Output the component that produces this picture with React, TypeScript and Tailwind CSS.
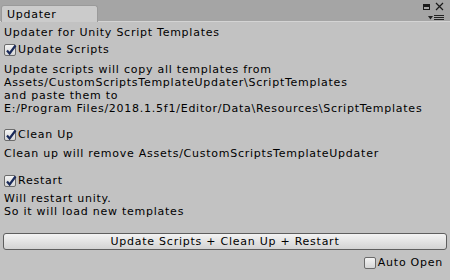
function Check({ checked }: { checked: boolean }) {
  return (
    <span className="relative inline-block w-[12px] h-[12px] mr-[2px] rounded-[2px] border border-[#6b6b6b] bg-gradient-to-b from-[#f4f4f4] to-[#d6d6d6] shrink-0">
      {checked && (
        <svg viewBox="0 0 12 12" className="absolute left-[0px] top-[-1px] w-[12px] h-[12px]">
          <path d="M2 6.5 L4.6 9.5 L10.5 1.5" fill="none" stroke="#1a2a5a" strokeWidth="2.2" />
        </svg>
      )}
    </span>
  );
}

export default function App() {
  return (
    <div
      className="w-[450px] h-[280px] bg-[#c2c2c2] text-[11px] leading-[13px] tracking-[0.75px] text-[#000] flex flex-col overflow-hidden"
      style={{ fontFamily: '"DejaVu Sans", Verdana, sans-serif' }}
    >
      <div className="h-[22px] bg-[#a5a5a5] flex items-end relative border-b border-[#d4d4d4]">
        <div className="ml-[1px] w-[97px] h-[17px] mb-[-1px] bg-[#cbcbcb] border border-[#9a9a9a] border-b-0 rounded-t-[3px] pl-[5px] pt-[1px] text-[11px] leading-[15px]">
          Updater
        </div>
        <div className="absolute right-[6px] top-[2px] flex items-center gap-[5px]">
          <span className="w-[7px] h-[6px] border border-[#1a1a1a] border-t-[3px]" />
          <svg width="9" height="9" viewBox="0 0 9 9">
            <path d="M1 1 L8 8 M8 1 L1 8" stroke="#1a1a1a" strokeWidth="1.2" />
          </svg>
        </div>
        <div className="absolute right-[6px] top-[15px] flex items-center gap-[1px]">
          <svg width="5" height="4" viewBox="0 0 5 4">
            <path d="M0 0 L5 0 L2.5 3.5 Z" fill="#222" />
          </svg>
          <svg width="10" height="6" viewBox="0 0 10 6">
            <path d="M0 0.5 H10 M0 2.5 H10 M0 4.5 H10" stroke="#222" strokeWidth="1" />
          </svg>
        </div>
      </div>

      <div className="flex flex-col px-[4px] pt-[4px]">
        <div>Updater for Unity Script Templates</div>
        <label className="flex items-center mt-[3px] h-[15px]">
          <Check checked />
          Update Scripts
        </label>
        <div className="mt-[6px]">
          <div>Update scripts will copy all templates from</div>
          <div>Assets/CustomScriptsTemplateUpdater\ScriptTemplates</div>
          <div>and paste them to</div>
          <div>E:/Program Files/2018.1.5f1/Editor/Data\Resources\ScriptTemplates</div>
        </div>
        <label className="flex items-center mt-[12px] h-[15px]">
          <Check checked />
          Clean Up
        </label>
        <div className="mt-[5px]">Clean up will remove Assets/CustomScriptsTemplateUpdater</div>
        <label className="flex items-center mt-[13px] h-[15px]">
          <Check checked />
          Restart
        </label>
        <div className="mt-[4px]">
          <div>Will restart unity.</div>
          <div>So it will load new templates</div>
        </div>
      </div>

      <div className="px-[3px] mt-[15px]">
        <button className="w-full h-[17px] rounded-[3px] border border-[#5e5e5e] bg-gradient-to-b from-[#f3f3f3] to-[#d3d3d3] text-[11px] leading-[15px] tracking-[0.75px] text-black">
          Update Scripts + Clean Up + Restart
        </button>
      </div>
      <div className="flex justify-end pr-[7px] mt-[5px]">
        <label className="flex items-center h-[15px]">
          <Check checked={false} />
          Auto Open
        </label>
      </div>
    </div>
  );
}
